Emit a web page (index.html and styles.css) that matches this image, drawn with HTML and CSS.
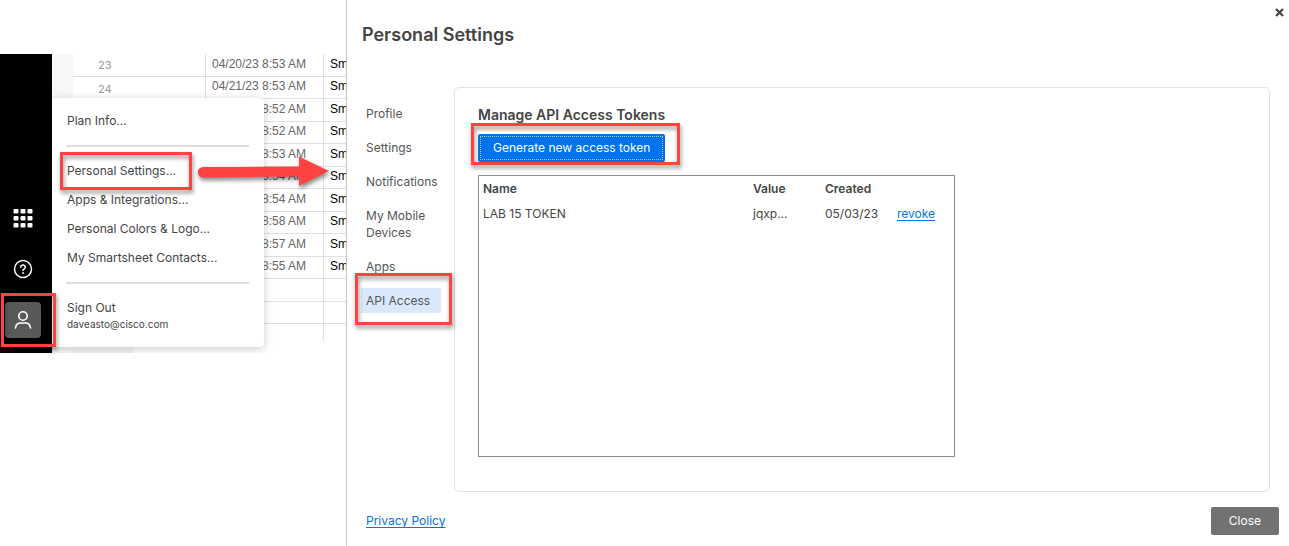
FILE: index.html
```html
<!DOCTYPE html>
<html lang="en">
<head>
<meta charset="utf-8">
<title>Personal Settings</title>
<link rel="stylesheet" href="styles.css">
</head>
<body>
<div class="page">
  <section class="workspace">
    <nav class="rail" aria-label="Main">
      <button class="rail-button" type="button" aria-label="Apps">
        <svg width="36" height="36" viewBox="0 0 36 36" fill="#fff">
          <rect x="8.500" y="9" width="5" height="4.500" rx="1"/><rect x="15.500" y="9" width="5" height="4.500" rx="1"/><rect x="22.500" y="9" width="5" height="4.500" rx="1"/>
          <rect x="8.500" y="16" width="5" height="4.500" rx="1"/><rect x="15.500" y="16" width="5" height="4.500" rx="1"/><rect x="22.500" y="16" width="5" height="4.500" rx="1"/>
          <rect x="8.500" y="23" width="5" height="4.500" rx="1"/><rect x="15.500" y="23" width="5" height="4.500" rx="1"/><rect x="22.500" y="23" width="5" height="4.500" rx="1"/>
        </svg>
      </button>
      <button class="rail-button" type="button" aria-label="Help">
        <svg width="36" height="36" viewBox="0 0 36 36" fill="none" stroke="#fff" stroke-width="1.5" stroke-linecap="round">
          <circle cx="18" cy="18" r="8.500"/>
          <path d="M15.700 16.200a2.300 2.100 0 1 1 3.500 1.700c-.8.500-1.200.8-1.200 1.700"/>
          <path d="M18 22v.1" stroke-width="1.800"/>
        </svg>
      </button>
      <button class="rail-button active" type="button" aria-label="Account">
        <svg width="36" height="36" viewBox="0 0 36 36" fill="none" stroke="#fff" stroke-width="1.600" stroke-linecap="round">
          <circle cx="18" cy="14" r="4.200"/>
          <path d="M10.500 26c.4-3.200 2.600-5 5-5h5c2.400 0 4.600 1.800 5 5"/>
        </svg>
      </button>
    </nav>
    <div class="gutter"></div>
    <div class="sheet">
      <table class="grid">
        <colgroup><col class="col-number"><col class="col-date"><col class="col-text"></colgroup>
        <tbody>
          <tr><td>23</td><td>04/20/23 8:53 AM</td><td>Sm</td></tr>
          <tr><td>24</td><td>04/21/23 8:53 AM</td><td>Sm</td></tr>
          <tr><td></td><td>04/22/23 8:52 AM</td><td>Sm</td></tr>
          <tr><td></td><td>04/23/23 8:52 AM</td><td>Sm</td></tr>
          <tr><td></td><td>04/24/23 8:53 AM</td><td>Sm</td></tr>
          <tr><td></td><td>04/25/23 8:54 AM</td><td>Sm</td></tr>
          <tr><td></td><td>04/26/23 8:54 AM</td><td>Sm</td></tr>
          <tr><td></td><td>04/27/23 8:58 AM</td><td>Sm</td></tr>
          <tr><td></td><td>04/28/23 8:57 AM</td><td>Sm</td></tr>
          <tr><td></td><td>04/29/23 8:55 AM</td><td>Sm</td></tr>
          <tr><td></td><td></td><td></td></tr>
          <tr><td></td><td></td><td></td></tr>
          <tr><td></td><td></td><td></td></tr>
        </tbody>
      </table>
      <div class="scroll-strip"></div>
    </div>
    <div class="menu">
      <button class="menu-item" type="button">Plan Info...</button>
      <hr class="divider">
      <button class="menu-item" type="button">Personal Settings...</button>
      <button class="menu-item" type="button">Apps &amp; Integrations...</button>
      <button class="menu-item" type="button">Personal Colors &amp; Logo...</button>
      <button class="menu-item" type="button">My Smartsheet Contacts...</button>
      <hr class="divider">
      <button class="menu-item account" type="button"><span>Sign Out</span><small>daveasto@cisco.com</small></button>
    </div>
  </section>

  <main class="dialog">
    <header class="dialog-header">
      <h1>Personal Settings</h1>
      <button class="dismiss" type="button" aria-label="Dismiss">
        <svg width="9" height="9" viewBox="0 0 9 9" stroke="#444" stroke-width="2.200"><path d="M1 1l7 7M8 1l-7 7"/></svg>
      </button>
    </header>
    <div class="dialog-body">
      <nav class="tabs" aria-label="Settings sections">
        <a href="#profile">Profile</a>
        <a href="#settings">Settings</a>
        <a href="#notifications">Notifications</a>
        <a href="#devices">My Mobile Devices</a>
        <a href="#apps">Apps</a>
        <a href="#api" class="current" aria-current="page">API Access</a>
      </nav>
      <section class="panel">
        <h2>Manage API Access Tokens</h2>
        <button class="generate" type="button"><span>Generate new access token</span></button>
        <div class="tokens">
          <table>
            <colgroup><col class="col-name"><col class="col-small"><col class="col-small"><col></colgroup>
            <thead><tr><th>Name</th><th>Value</th><th>Created</th><th></th></tr></thead>
            <tbody><tr><td>LAB 15 TOKEN</td><td>jqxp...</td><td>05/03/23</td><td><a href="#revoke">revoke</a></td></tr></tbody>
          </table>
        </div>
      </section>
    </div>
    <footer class="dialog-footer">
      <a href="#privacy">Privacy Policy</a>
      <button class="close" type="button">Close</button>
    </footer>
  </main>

  <div class="callout callout-account"></div>
  <div class="callout callout-settings"></div>
  <div class="callout callout-generate"></div>
  <div class="callout callout-api"></div>
  <svg class="arrow" width="132" height="30" viewBox="0 0 132 30" fill="#ff4343">
    <path d="M5 10L101 9.500V-.5L131 14L101 29V19.500L5 20.500A5 5 0 0 1 5 10Z"/>
  </svg>
</div>
</body>
</html>
```
FILE: styles.css
```css
* { box-sizing: border-box; }
body { margin: 0; background: #fff; color: #444; font: 12px/16px Inter, "Liberation Sans", sans-serif; }
button { font: inherit; color: inherit; border: 0; padding: 0; background: none; cursor: pointer; }
a { color: #0073ec; text-underline-offset: 2px; }

.page { position: relative; display: grid; grid-template-columns: 346px 1fr; min-height: 100vh; }

/* Spreadsheet behind the dialog */
.workspace { position: relative; display: flex; align-items: stretch; align-self: start; margin-top: 54px; overflow: hidden; }
.rail { flex: none; width: 52px; background: #000; display: flex; flex-direction: column; justify-content: flex-end; gap: 15px; padding: 0 0 15px 5px; }
.rail-button { width: 36px; height: 36px; border-radius: 4px; }
.rail-button svg { display: block; }
.rail-button.active { background: #595959; }
.gutter { flex: none; width: 21px; background: #f8f7f5; }
.sheet { flex: 1; min-width: 0; overflow: hidden; }
.grid { width: 100%; table-layout: fixed; border-collapse: separate; border-spacing: 0; font: 12px/16px "Liberation Sans", Arial, sans-serif; }
.col-number { width: 133px; }
.col-date { width: 118px; }
.grid td { height: 22px; padding: 0 0 4px 6px; border-right: 1px solid #e0e0e0; border-bottom: 1px solid #e0e0e0; white-space: nowrap; overflow: hidden; color: #666; }
.grid tr:nth-child(odd) td { height: 23px; padding-bottom: 2px; }
.grid td:first-child { padding: 2px 0 0 25px; color: #999; font-family: Inter, sans-serif; font-size: 11px; }
.grid td:last-child { border-right: 0; color: #000; text-overflow: clip; }
.grid tr:last-child td { height: 17px; padding-bottom: 0; border-bottom: 0; }
.scroll-strip { width: 60px; height: 12px; background: #f4f3f2; }

.menu { position: absolute; left: 52px; top: 44px; width: 212px; padding: 8px 15px 15px 14px; background: #fff; border-radius: 4px; box-shadow: 0 2px 10px rgba(0, 0, 0, .2); }
.menu-item { display: block; width: 100%; height: 29px; padding-left: 1px; text-align: left; white-space: nowrap; }
.menu-item.account { display: flex; flex-direction: column; height: auto; padding-top: 7px; }
.menu-item small { font-size: 10px; line-height: 16px; }
.divider { height: 2px; margin: 10px 0 9px; border: 0; background: #dedede; }

/* Dialog */
.dialog { display: flex; flex-direction: column; min-width: 0; border-left: 1px solid #c4c4c4; }
.dialog-header { display: flex; justify-content: space-between; align-items: flex-start; padding: 8px 5px 0 15px; }
h1 { margin: 15px 0 0; font-size: 18px; line-height: 24px; font-weight: 600; }
.dismiss { padding: 0; line-height: 0; }
.dialog-body { flex: 1; display: flex; padding: 40px 19px 0 14px; }
.tabs { flex: none; width: 80px; margin-right: 13px; padding-top: 14px; display: flex; flex-direction: column; gap: 9px; }
.tabs a { padding: 4px 5px; line-height: 17px; color: #555; text-decoration: none; }
.tabs a.current { background: #d9e9fb; }
.panel { flex: 1; min-width: 0; padding: 18px 23px 30px; border: 1px solid #e2e2e2; border-radius: 5px; }
h2 { margin: 0 0 10px; font-size: 14px; line-height: 18px; font-weight: 600; }
.generate { display: block; padding: 2px; border-radius: 2px; background: #0073ec; color: #fff; }
.generate span { display: block; padding: 3px 12px; border: 1px dotted #9cc8fa; line-height: 16px; }
.tokens { max-width: 477px; min-height: 282px; margin-top: 13px; border: 1px solid #8c8c8c; }
.tokens table { width: 100%; table-layout: fixed; border-collapse: collapse; }
.tokens th, .tokens td { height: 25px; padding: 0 0 0 4px; text-align: left; white-space: nowrap; }
.tokens th { font-weight: 600; }
.col-name { width: 270px; }
.col-small { width: 72px; }
.dialog-footer { display: flex; justify-content: space-between; align-items: center; padding: 15px 10px 11px 19px; }
.close { padding: 6px 18px; border-radius: 2px; background: #727272; color: #fff; }

/* Annotations laid over the page */
.callout { position: absolute; border: 3px solid #ff4343; filter: drop-shadow(1px 3px 2px rgba(0, 0, 0, .45)); pointer-events: none; }
.callout-account { left: 1px; top: 293px; width: 55px; height: 54px; }
.callout-settings { left: 60px; top: 152px; width: 132px; height: 38px; }
.callout-generate { left: 471px; top: 123px; width: 209px; height: 42px; }
.callout-api { left: 355px; top: 273px; width: 97px; height: 52px; }
.arrow { position: absolute; left: 198px; top: 157px; overflow: visible; filter: drop-shadow(1px 3px 2px rgba(0, 0, 0, .45)); pointer-events: none; }
```
